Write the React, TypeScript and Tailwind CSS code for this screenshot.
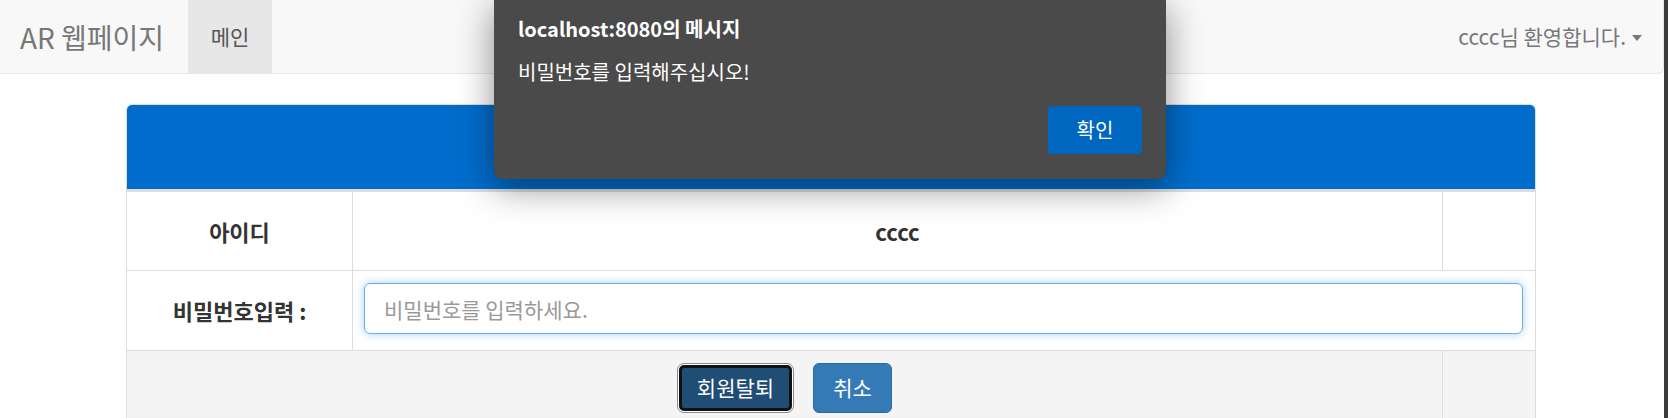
export default function App() {
  return (
    <div className="relative flex h-[418px] w-full overflow-hidden bg-white font-['Noto_Sans_CJK_KR','Noto_Sans',sans-serif]">
      <div className="min-w-0 flex-1">
        {/* Navbar */}
        <nav className="flex h-[74px] items-stretch justify-between rounded-br-[6px] border-r border-b border-[#e7e7e7] bg-[#f8f8f8]">
          <div className="flex items-stretch">
            <span className="flex w-[188px] items-center pl-[20px] text-[28px] text-[#777]">AR 웹페이지</span>
            <span className="flex w-[84px] items-center justify-center bg-[#e7e7e7] text-[21px] text-[#555]">메인</span>
          </div>
          <div className="flex items-center pr-[21px] text-[21px] text-[#777]">
            cccc님 환영합니다.
            <span className="mt-[2px] ml-[6px] h-0 w-0 border-x-[5px] border-t-[6px] border-x-transparent border-t-[#777]" />
          </div>
        </nav>

        {/* Panel */}
        <div className="pt-[30px] pl-[126px]">
          <div className="w-[1410px] rounded-t-[6px] border border-b-0 border-[#ddd]">
            <div className="h-[87px] rounded-t-[5px] border-b-[3px] border-[#ddd] bg-[#006dcc]" />

            {/* Row: id */}
            <div className="flex h-[79px] border-b border-[#ddd]">
              <div className="flex w-[226px] items-center justify-center border-r border-[#ddd] text-[22px] font-bold text-[#333]">아이디</div>
              <div className="flex flex-1 items-center justify-center border-r border-[#ddd] text-[22px] font-bold text-[#333]">cccc</div>
              <div className="w-[92px]" />
            </div>

            {/* Row: password */}
            <div className="flex h-[80px] border-b border-[#ddd]">
              <div className="flex w-[226px] items-center justify-center border-r border-[#ddd] text-[22px] font-bold text-[#333]">비밀번호입력 :</div>
              <div className="flex-1 pt-[12px] pr-[12px] pl-[11px]">
                <input
                  type="password"
                  placeholder="비밀번호를 입력하세요."
                  className="h-[51px] w-full rounded-[6px] border border-[#66afe9] px-[19px] text-[21px] shadow-[0_0_8px_rgba(102,175,233,0.6)] outline-none placeholder:text-[#999]"
                />
              </div>
            </div>

            {/* Row: buttons */}
            <div className="flex h-[80px] bg-[#f4f4f4]">
              <div className="flex flex-1 justify-center gap-[19px] border-r border-[#ddd] pt-[12px]">
                <button className="h-[50px] w-[117px] rounded-[7px] border border-[#8a8a8a] bg-white p-[1px]">
                  <span className="flex h-full w-full items-center justify-center rounded-[5px] border-[3px] border-[#111] bg-[#204d74] text-[21px] text-white">회원탈퇴</span>
                </button>
                <button className="flex h-[50px] w-[79px] items-center justify-center rounded-[6px] border border-[#2e6da4] bg-[#337ab7] text-[21px] text-white">취소</button>
              </div>
              <div className="w-[92px]" />
            </div>
          </div>
        </div>
      </div>
      <div className="w-[4px] bg-[#3c3c3c]" />

      {/* Alert dialog */}
      <div className="absolute top-0 left-[494px] flex h-[179px] w-[672px] flex-col rounded-b-[8px] bg-[#4a4a4a] px-[24px] pt-[15px] shadow-[0_8px_36px_rgba(0,0,0,0.45)]">
        <div className="text-[20px] leading-[28px] font-bold text-white">localhost:8080의 메시지</div>
        <div className="mt-[15px] text-[20px] leading-[28px] text-white">비밀번호를 입력해주십시오!</div>
        <div className="mt-[20px] flex justify-end">
          <button className="h-[48px] w-[94px] rounded-[4px] bg-[#0067c0] text-[20px] text-white">확인</button>
        </div>
      </div>
    </div>
  );
}
